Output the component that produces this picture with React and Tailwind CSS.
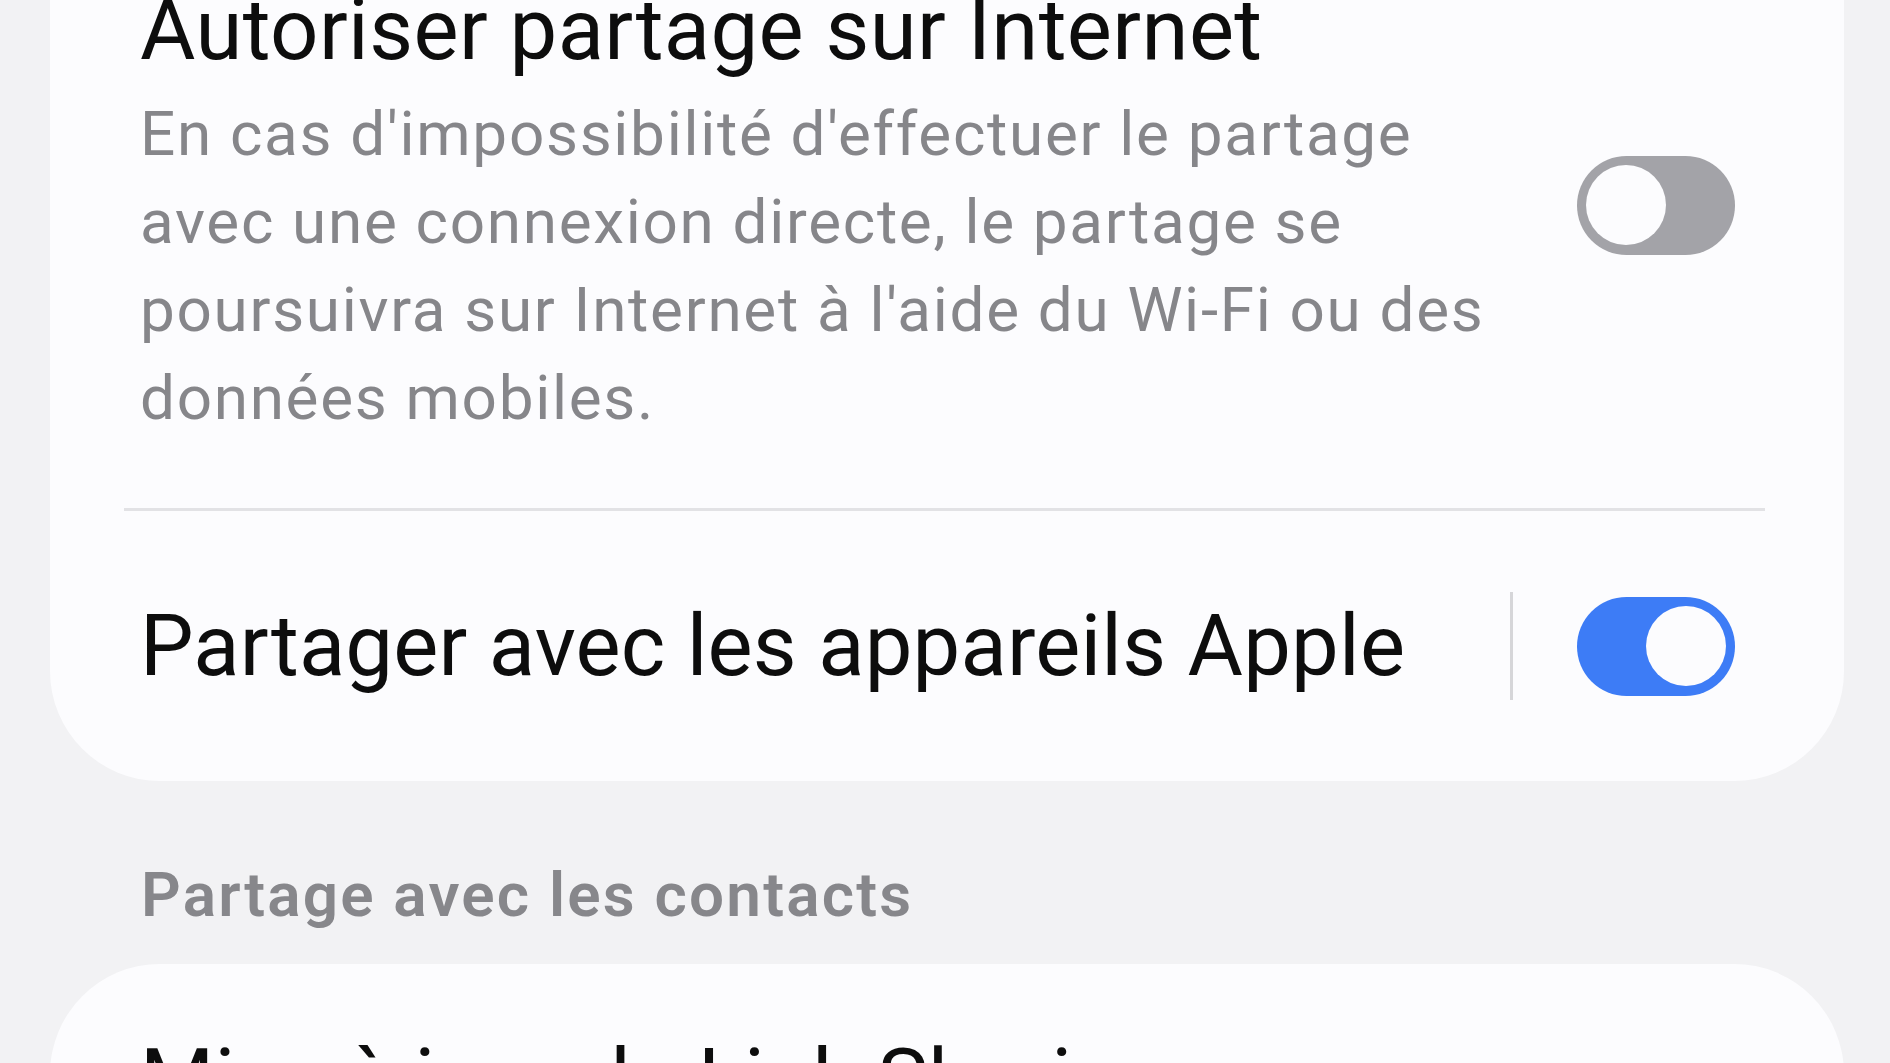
import React from 'react';

const Toggle = ({ on }) => (
  <div
    className={`flex h-[99px] w-[158px] shrink-0 items-center rounded-full px-[9px] ${
      on ? 'justify-end bg-[#3d7cf6]' : 'justify-start bg-[#a3a3a8]'
    }`}
  >
    <div className="h-[80px] w-[80px] rounded-full bg-[#fcfcfe]" />
  </div>
);

const App = () => {
  return (
    <div
      className="h-[1063px] w-[1890px] overflow-hidden bg-[#f2f2f4]"
      style={{ fontFamily: 'Roboto, "Noto Sans", sans-serif' }}
    >
      <div className="-mt-[58px] flex flex-col">
        {/* Card: partage */}
        <div className="ml-[50px] mr-[46px] rounded-b-[110px] bg-[#fcfcfe]">
          <div className="flex items-center pl-[90px] pr-[109px] pt-[40px] pb-[66px]">
            <div className="flex-1">
              <div className="text-[85px] leading-[96px] tracking-[0.4px] text-[#0d0d0d]">
                Autoriser partage sur Internet
              </div>
              <div className="mt-[12px] text-[62px] leading-[88px] tracking-[1.7px] text-[#86868a]">
                En cas d'impossibilité d'effectuer le partage
                <br />
                avec une connexion directe, le partage se
                <br />
                poursuivra sur Internet à l'aide du Wi-Fi ou des
                <br />
                données mobiles.
              </div>
            </div>
            <div className="mb-[14px]">
              <Toggle on={false} />
            </div>
          </div>

          <div className="ml-[74px] mr-[79px] h-[3px] bg-[#e2e2e5]" />

          <div className="flex h-[270px] items-center pl-[90px] pr-[109px]">
            <div className="flex-1 text-[85px] leading-[96px] tracking-[0.2px] text-[#0d0d0d]">
              Partager avec les appareils Apple
            </div>
            <div className="mr-[64px] h-[108px] w-[3px] bg-[#d6d6d9]" />
            <Toggle on />
          </div>
        </div>

        {/* Section header */}
        <div className="mt-[78px] pl-[141px] text-[62px] font-semibold leading-[72px] tracking-[2.2px] text-[#87878b]">
          Partage avec les contacts
        </div>

        {/* Card: contacts */}
        <div className="ml-[50px] mr-[46px] mt-[33px] rounded-t-[110px] bg-[#fcfcfe] pl-[90px] pt-[68px] pb-[80px]">
          <div className="text-[85px] leading-[96px] tracking-[0.4px] text-[#0d0d0d]">Mise à jour de Link Sharing</div>
        </div>
      </div>
    </div>
  );
};

export default App;
